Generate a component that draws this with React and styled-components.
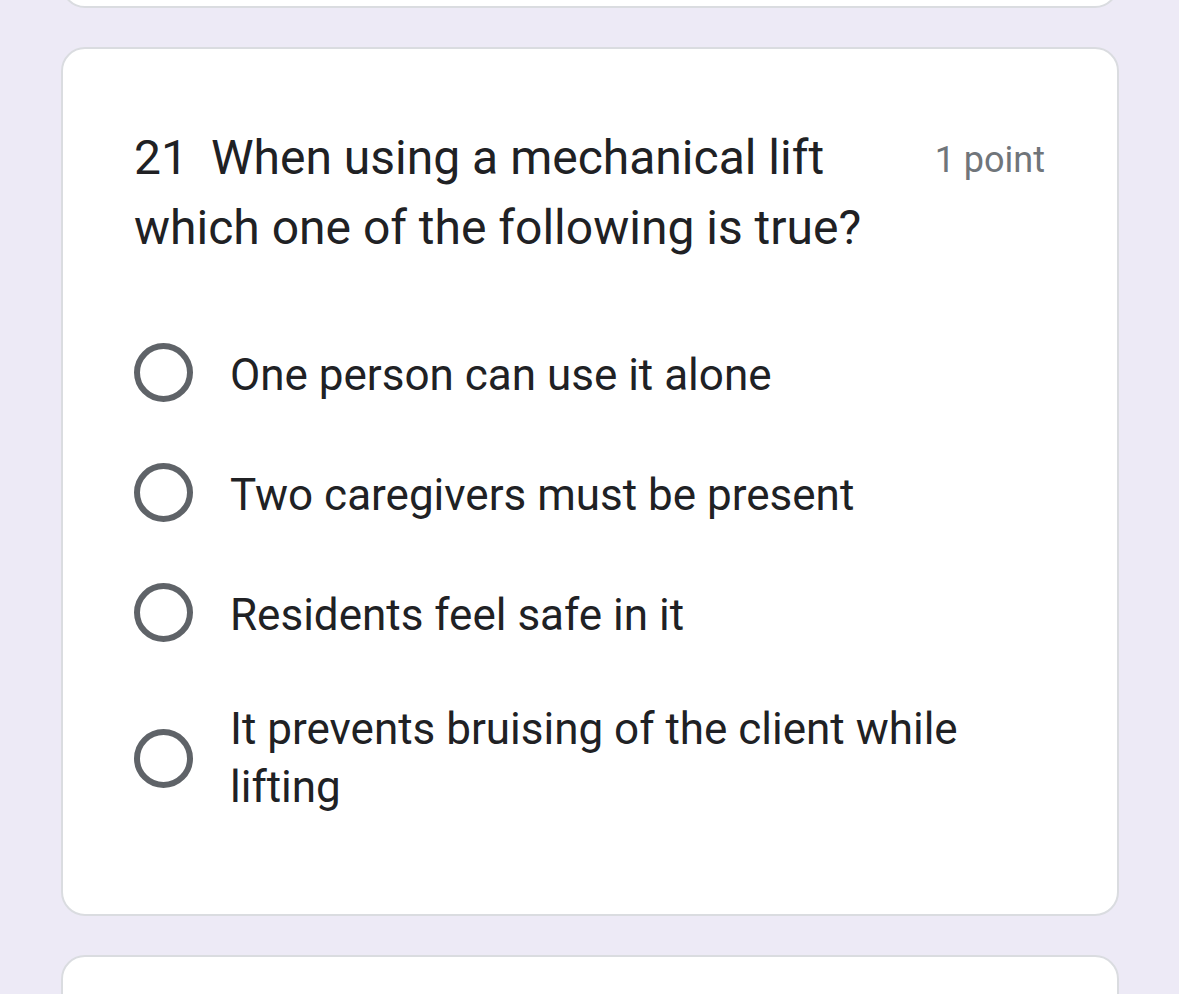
import React from "react";
import styled, { createGlobalStyle } from "styled-components";

const GlobalStyle = createGlobalStyle`
  html, body {
    margin: 0;
    padding: 0;
    background: #edeaf6;
  }
  body {
    font-family: Roboto, "Liberation Sans", sans-serif;
    overflow: hidden;
  }
`;

const options = [
  { label: "One person can use it alone" },
  { label: "Two caregivers must be present" },
  { label: "Residents feel safe in it" },
  { label: "It prevents bruising of the client while lifting", multi: true },
];

function App() {
  return (
    <>
      <GlobalStyle />
      <Page>
        <Stub height="48px" />
        <Card>
          <Header>
            <Title>
              <Number>21</Number>When using a mechanical lift which one of the
              following is true?
            </Title>
            <Points>1 point</Points>
          </Header>
          <OptionList>
            {options.map((o) => (
              <Option key={o.label}>
                <Radio />
                <OptionText multi={o.multi}>{o.label}</OptionText>
              </Option>
            ))}
          </OptionList>
        </Card>
        <Stub height="120px" />
      </Page>
    </>
  );
}

export default App;

const Page = styled.div`
  display: flex;
  flex-direction: column;
  gap: 39px;
  margin-top: -40px;
  padding: 0 60px 0 61px;
`;

const Card = styled.div`
  box-sizing: border-box;
  background: #fff;
  border: 2px solid #dadce0;
  border-radius: 24px;
  flex-shrink: 0;
  padding: 74px 72px 98px 71px;
`;

const Stub = styled(Card)`
  height: ${(props) => props.height};
  padding: 0;
`;

const Header = styled.div`
  display: flex;
  align-items: flex-start;
  gap: 44px;
`;

const Title = styled.div`
  flex: 1;
  font-size: 48px;
  line-height: 70px;
  color: #202124;
`;

const Number = styled.span`
  margin-right: 23px;
`;

const Points = styled.div`
  font-size: 36px;
  line-height: 70px;
  color: #70757a;
  white-space: nowrap;
  padding-top: 2px;
`;

const OptionList = styled.div`
  display: flex;
  flex-direction: column;
  gap: 56px;
  margin-top: 77px;
`;

const Option = styled.div`
  display: flex;
  align-items: center;
  gap: 37px;
`;

const Radio = styled.div`
  box-sizing: border-box;
  width: 59px;
  height: 59px;
  flex-shrink: 0;
  border: 6px solid #5f6368;
  border-radius: 50%;
`;

const OptionText = styled.div`
  font-size: 44px;
  line-height: 58px;
  color: #202124;
  max-width: 740px;
  padding-top: ${(props) => (props.multi ? "0" : "6px")};
`;
